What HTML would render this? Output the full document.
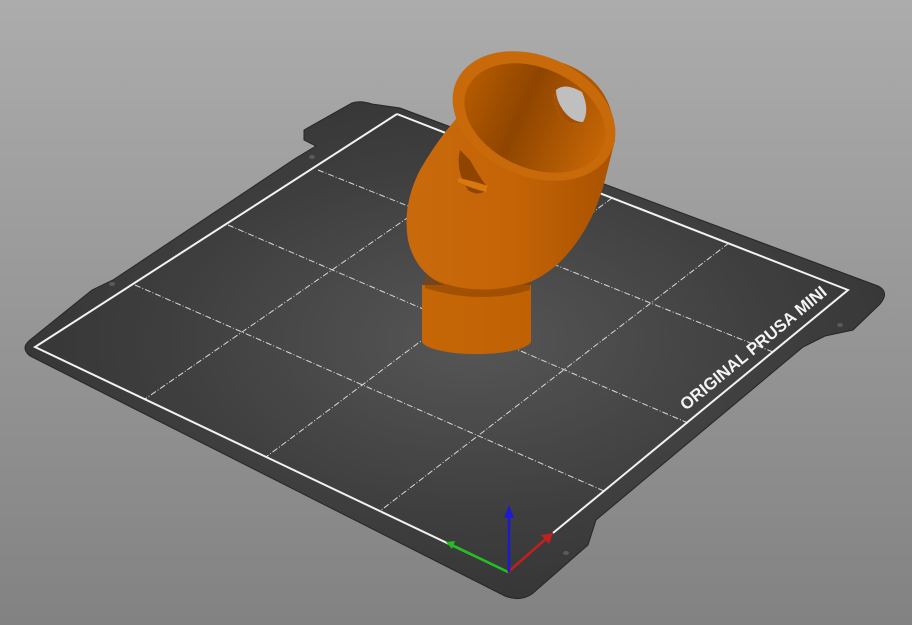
<!DOCTYPE html>
<html><head><meta charset="utf-8"><style>
html,body{margin:0;padding:0;width:912px;height:625px;overflow:hidden}
svg{display:block}
</style></head><body>
<svg width="912" height="625" viewBox="0 0 912 625" xmlns="http://www.w3.org/2000/svg">
<defs>
<linearGradient id="bg" x1="0" y1="0" x2="0" y2="1">
<stop offset="0" stop-color="#acacac"/><stop offset="1" stop-color="#828282"/>
</linearGradient>
<radialGradient id="bed" cx="0.52" cy="0.48" r="0.6">
<stop offset="0" stop-color="#565656"/><stop offset="0.6" stop-color="#3e3e3e"/><stop offset="1" stop-color="#333333"/>
</radialGradient>
<linearGradient id="body" x1="0" y1="0" x2="1" y2="0">
<stop offset="0" stop-color="#c86a0c"/><stop offset="0.5" stop-color="#c56406"/><stop offset="1" stop-color="#a95200"/>
</linearGradient>
<linearGradient id="inner" x1="0" y1="0" x2="1" y2="0">
<stop offset="0" stop-color="#b45a00"/><stop offset="0.4" stop-color="#8f4500"/><stop offset="1" stop-color="#c56606"/>
</linearGradient>
<linearGradient id="neck" x1="0" y1="0" x2="1" y2="0">
<stop offset="0" stop-color="#c66707"/><stop offset="1" stop-color="#c06104"/>
</linearGradient>
</defs>
<rect width="912" height="625" fill="url(#bg)"/>
<path d="M400,108 L372,104 Q360,100 352,103 L304,130 L304,140 L316,146 L296,158 L113,280 L92,290 L30,340 Q20,348 30,356 L505,596 Q520,602 532,594 L588,545 L596,520 L803,347 L825,336 L853,330 L880,304 Q890,292 878,286 Z" fill="url(#bed)" stroke="#262626" stroke-width="1"/>
<g fill="#5a5a5a"><ellipse cx="312" cy="157" rx="3" ry="2"/><ellipse cx="112" cy="284" rx="3" ry="2"/><ellipse cx="566" cy="553" rx="3" ry="2"/><ellipse cx="840" cy="325" rx="3" ry="2"/></g>
<g stroke="#d8d8d8" stroke-width="1" stroke-dasharray="6,2,1,2" fill="none">
<line x1="318" y1="170" x2="773" y2="352"/>
<line x1="228" y1="225" x2="688" y2="423"/>
<line x1="135" y1="285" x2="604" y2="491"/>
<line x1="500" y1="154" x2="145" y2="399"/>
<line x1="612" y1="198" x2="266" y2="457"/>
<line x1="729" y1="243" x2="380" y2="511"/>
</g>
<path d="M397,114 L848,290 L553,533" fill="none" stroke="#f2f2f2" stroke-width="2"/>
<path d="M397,114 L35,347 L508,572" fill="none" stroke="#f2f2f2" stroke-width="2"/>
<text x="0" y="0" transform="translate(686,411) rotate(-39.5)" font-family="Liberation Sans, sans-serif" font-weight="bold" font-size="17" fill="#f4f4f4" textLength="184" lengthAdjust="spacingAndGlyphs">ORIGINAL PRUSA MINI</text>
<line x1="508" y1="572" x2="450" y2="544" stroke="#20c020" stroke-width="2.5"/>
<path d="M446,542 L455,541 L452,549 Z" fill="#20c020"/>
<line x1="508" y1="572" x2="548" y2="537" stroke="#c02020" stroke-width="2.5"/>
<path d="M553,533 L541,535 L549,544 Z" fill="#c02020"/>
<line x1="509" y1="572" x2="509" y2="514" stroke="#1b1bd0" stroke-width="2.5"/>
<path d="M509,505 L504,518 L514,518 Z" fill="#1b1bd0"/>
<path d="M422,285 L422,342 A55,14 0 0 0 531,342 L531,285 Z" fill="url(#neck)"/>
<path d="M466,108 Q440,135 420,170 Q402,205 408,240 Q418,285 470,292 Q525,295 560,262 Q592,230 605,180 L615,140 Q615,80 560,62 Q500,55 466,108 Z" fill="url(#body)"/>
<path d="M425,275 Q470,300 530,282 L530,290 Q480,305 425,288 Z" fill="#8a4200" opacity="0.6"/>
<ellipse cx="534" cy="116" rx="85" ry="60" transform="rotate(24 534 116)" fill="#c86a0a"/>
<ellipse cx="535" cy="118" rx="74" ry="50" transform="rotate(24 535 118)" fill="url(#inner)"/>
<path d="M556,90 Q565,82 582,92 Q590,110 583,122 Q570,128 560,115 Q552,100 556,90 Z" fill="#bfbfbf"/>
<path d="M556,90 Q552,100 560,115 Q570,128 583,122 Q572,122 563,110 Q556,100 556,90 Z" fill="#a55000"/>
<path d="M460,150 Q455,170 468,190 Q480,198 488,188 Q478,175 470,160 Z" fill="#8f4500"/>
<path d="M458,178 Q470,180 488,186 L486,192 Q470,188 458,182 Z" fill="#d8780e"/>
</svg>
</body></html>
